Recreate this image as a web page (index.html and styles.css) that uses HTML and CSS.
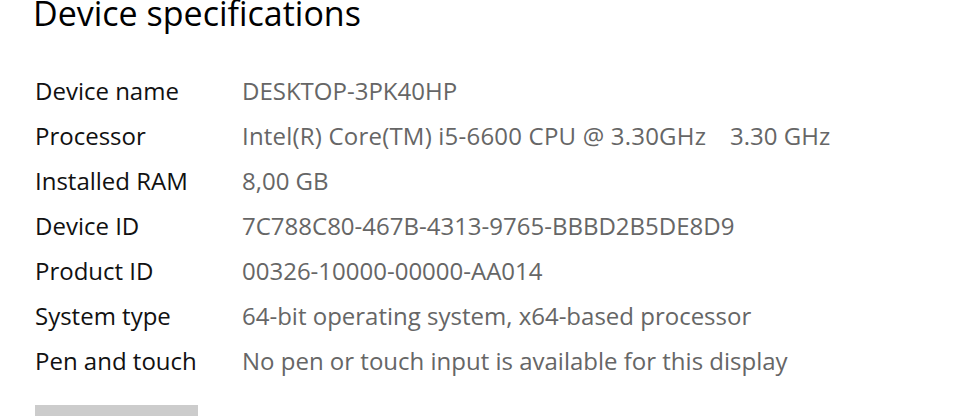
FILE: index.html
```html
<!DOCTYPE html>
<html>
<head>
<meta charset="utf-8">
<link rel="stylesheet" href="styles.css">
</head>
<body>
<main class="page">
  <h1 class="title">Device specifications</h1>
  <dl class="specs">
    <dt>Device name</dt><dd>DESKTOP-3PK40HP</dd>
    <dt>Processor</dt><dd><span class="cpu">Intel(R) Core(TM) i5-6600 CPU @ 3.30GHz</span><span class="speed">3.30 GHz</span></dd>
    <dt>Installed RAM</dt><dd>8,00 GB</dd>
    <dt>Device ID</dt><dd>7C788C80-467B-4313-9765-BBBD2B5DE8D9</dd>
    <dt>Product ID</dt><dd>00326-10000-00000-AA014</dd>
    <dt>System type</dt><dd>64-bit operating system, x64-based processor</dd>
    <dt>Pen and touch</dt><dd>No pen or touch input is available for this display</dd>
  </dl>
  <div class="button"></div>
</main>
</body>
</html>
```
FILE: styles.css
```css
html, body {
  margin: 0;
  padding: 0;
  background: #fff;
}
.page {
  padding: 0 0 0 35px;
  font-family: "Open Sans", "Noto Sans", sans-serif;
  overflow: hidden;
  height: 416px;
}
.title {
  margin: -9px 0 0 -2px;
  font-size: 34px;
  font-weight: 400;
  line-height: 44px;
  color: #000;
}
.specs {
  display: grid;
  grid-template-columns: 207px auto;
  grid-auto-rows: 45px;
  margin: 33px 0 0 0;
  font-size: 24px;
  line-height: 45px;
}
.specs dt {
  color: #111;
  white-space: nowrap;
}
.specs dd {
  margin: 0;
  color: #666;
  white-space: nowrap;
}
.cpu {
  letter-spacing: 0.2px;
}
.speed {
  margin-left: 24px;
}
.button {
  margin-top: 22px;
  width: 163px;
  height: 40px;
  background: #cccccc;
}
```
